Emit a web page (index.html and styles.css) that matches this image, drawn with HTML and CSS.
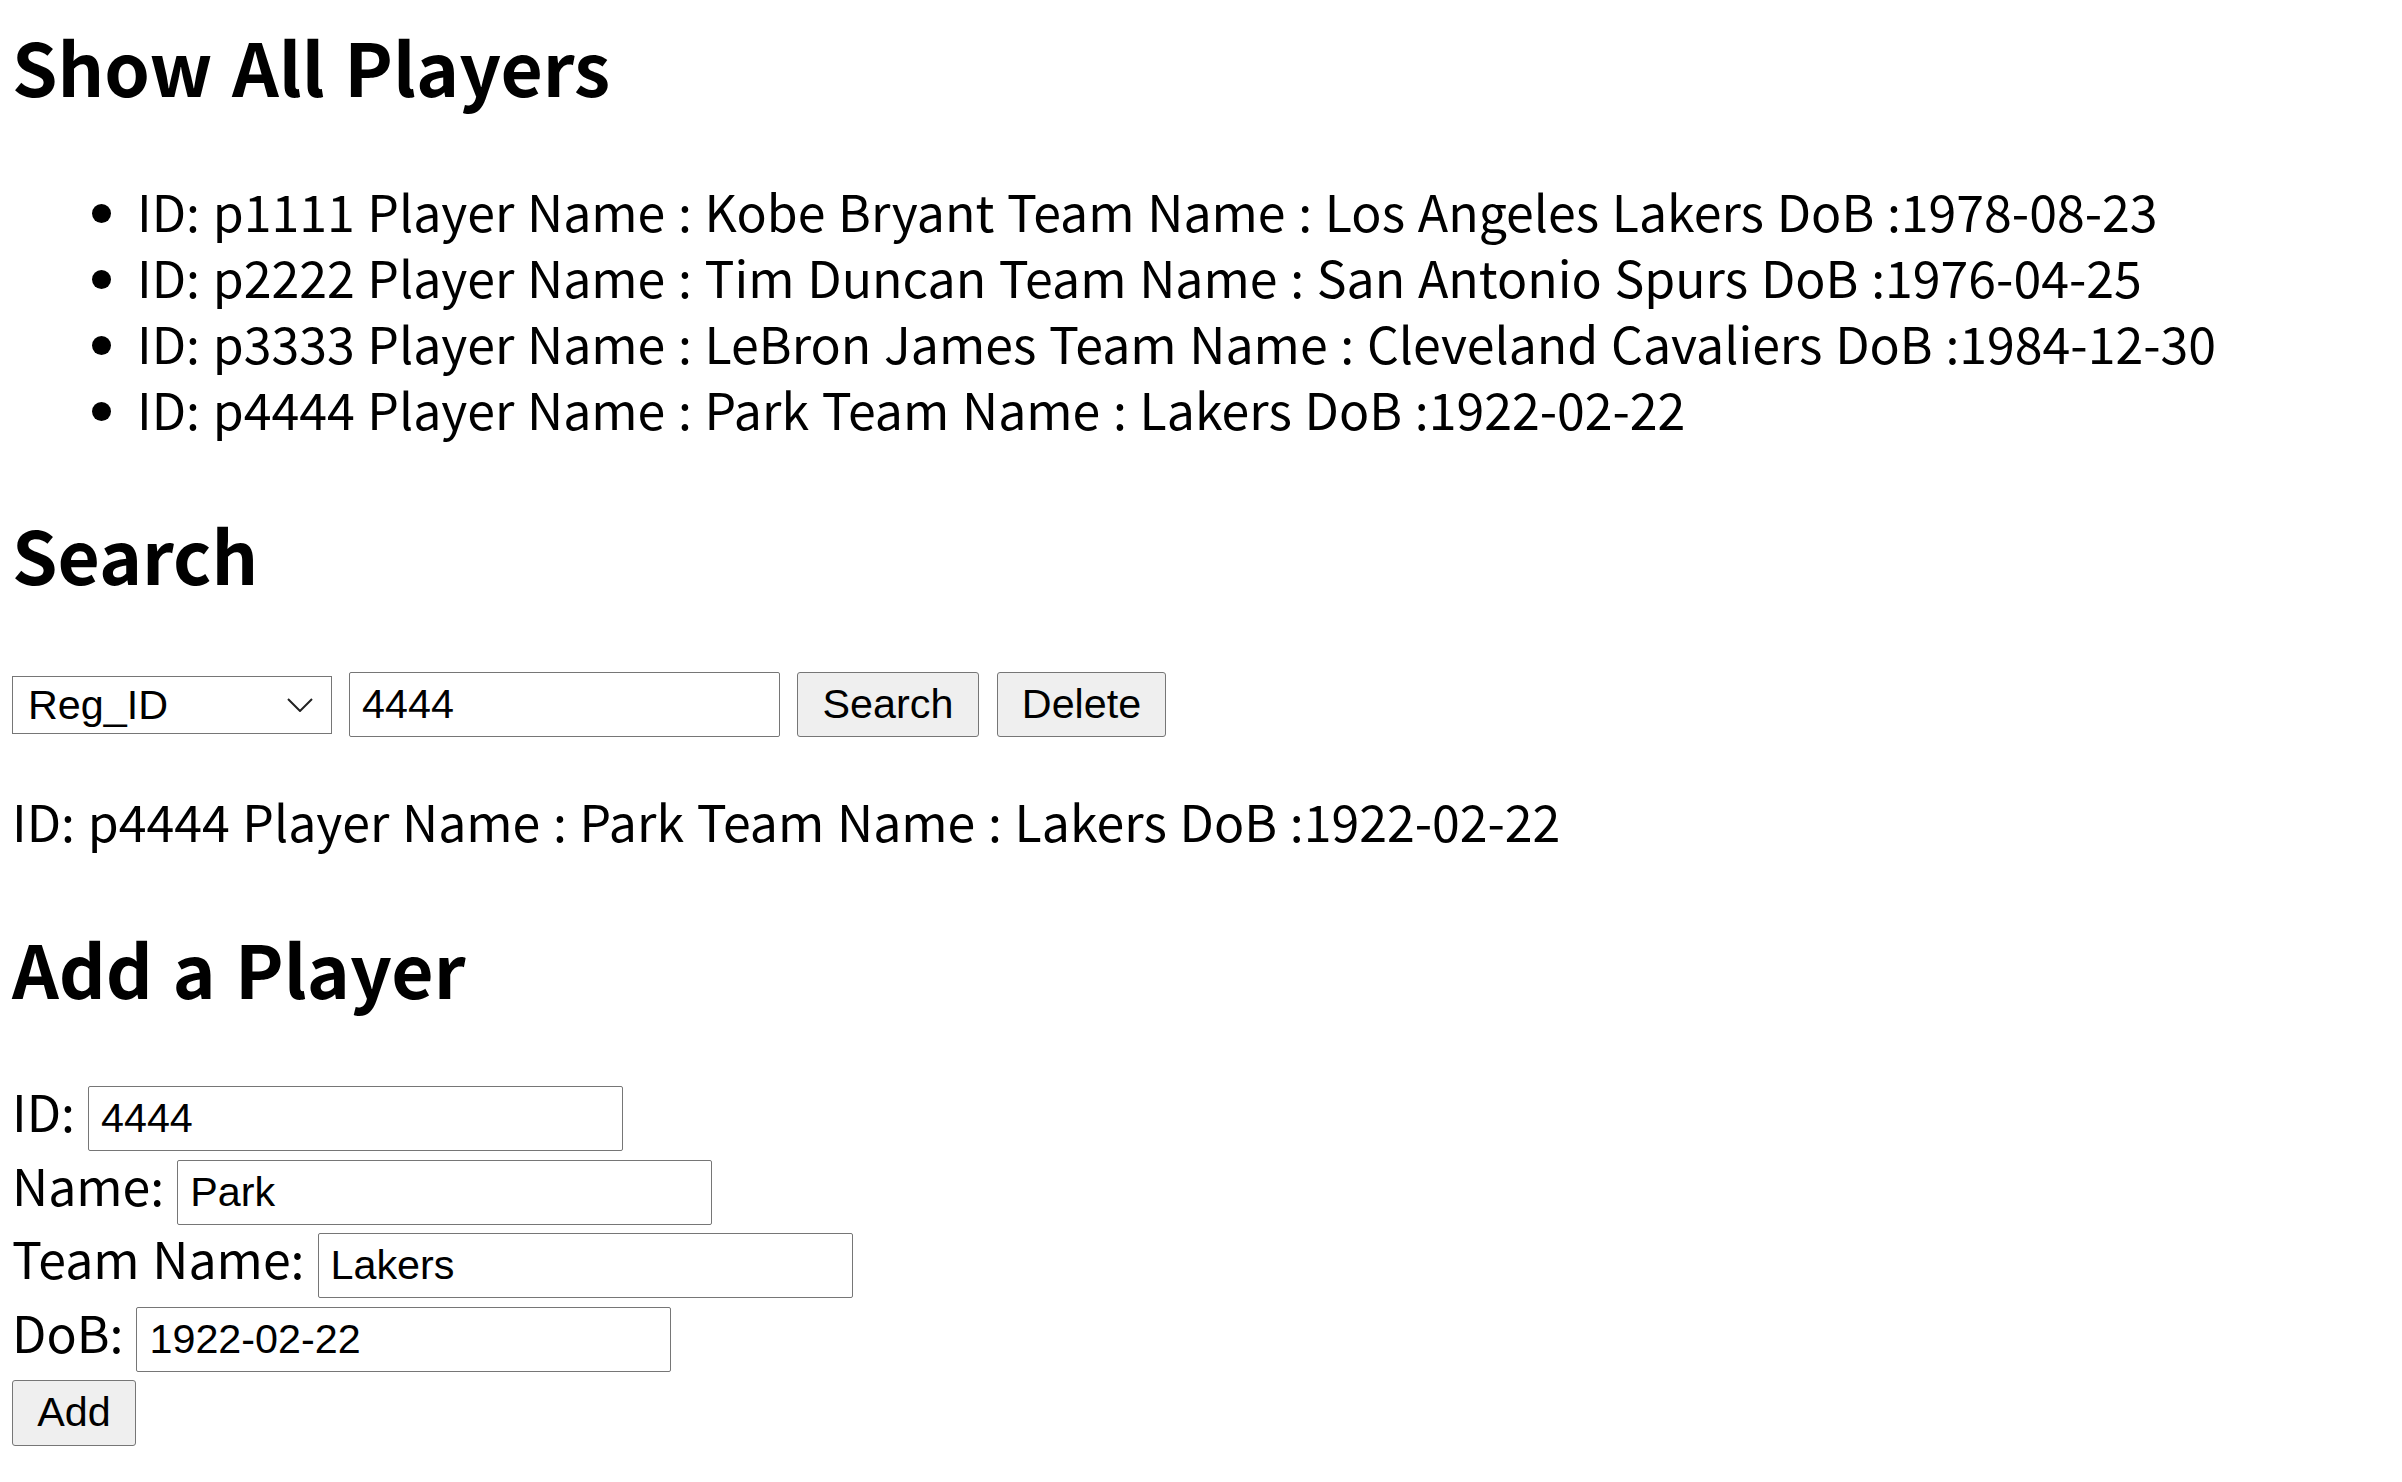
FILE: index.html
```html
<!DOCTYPE html>
<html>
<head>
<meta charset="utf-8">
<title>Players</title>
<link rel="stylesheet" href="styles.css">
</head>
<body>
<h2 class="heading heading-first">Show All Players</h2>
<ul class="players">
  <li>ID: p1111 Player Name : Kobe Bryant Team Name : Los Angeles Lakers DoB :1978-08-23</li>
  <li>ID: p2222 Player Name : Tim Duncan Team Name : San Antonio Spurs DoB :1976-04-25</li>
  <li>ID: p3333 Player Name : LeBron James Team Name : Cleveland Cavaliers DoB :1984-12-30</li>
  <li>ID: p4444 Player Name : Park Team Name : Lakers DoB :1922-02-22</li>
</ul>

<h2 class="heading heading-search">Search</h2>
<div class="search-row">
  <div class="select-wrap">
    <select class="select">
      <option>Reg_ID</option>
    </select>
    <svg class="chevron" width="26" height="14" viewBox="0 0 26 14"><path d="M1 1 L13 13 L25 1" fill="none" stroke="#222" stroke-width="2"/></svg>
  </div>
  <input class="field field-search" type="text" value="4444">
  <button class="btn btn-search">Search</button>
  <button class="btn btn-delete">Delete</button>
</div>

<p class="result">ID: p4444 Player Name : Park Team Name : Lakers DoB :1922-02-22</p>

<h2 class="heading heading-add">Add a Player</h2>
<form class="add-form">
  <div class="row"><label class="label">ID:</label><input class="field field-add" type="text" value="4444"></div>
  <div class="row"><label class="label">Name:</label><input class="field field-add" type="text" value="Park"></div>
  <div class="row"><label class="label">Team Name:</label><input class="field field-add" type="text" value="Lakers"></div>
  <div class="row"><label class="label">DoB:</label><input class="field field-add" type="text" value="1922-02-22"></div>
  <div class="row"><button class="btn btn-add" type="button">Add</button></div>
</form>
</body>
</html>
```

FILE: styles.css
```css
html, body {
  background: #ffffff;
}

body {
  margin: 0;
  padding: 0 12px;
  font-family: "Noto Sans CJK KR", "Noto Sans", sans-serif;
  font-size: 50px;
  line-height: 66px;
  word-spacing: 1.5px;
  color: #000000;
}

.heading {
  font-size: 73px;
  line-height: 90px;
  font-weight: 700;
  word-spacing: 3px;
  margin: 0;
}

.heading-first {
  margin-top: 20px;
}

.players {
  margin: 67px 0 0 0;
  padding: 0 0 0 125px;
  list-style: disc;
}

.heading-search {
  margin-top: 67px;
}

.search-row {
  display: flex;
  align-items: center;
  gap: 17px;
  margin-top: 74px;
}

.select-wrap {
  position: relative;
  width: 320px;
  height: 58px;
}

.select {
  display: block;
  appearance: none;
  -webkit-appearance: none;
  box-sizing: border-box;
  width: 320px;
  height: 58px;
  margin: 0;
  padding: 0 0 0 15px;
  border: 1px solid #767676;
  border-radius: 0;
  background: #ffffff;
  font-family: "Liberation Sans", Arial, sans-serif;
  font-size: 41.3px;
  word-spacing: 0;
  color: #000000;
}

.chevron {
  position: absolute;
  left: 275px;
  top: 22px;
  pointer-events: none;
}

.field {
  box-sizing: border-box;
  height: 65px;
  margin: 0;
  padding: 0 12px;
  border: 1px solid #767676;
  border-radius: 2px;
  background: #ffffff;
  font-family: "Liberation Sans", Arial, sans-serif;
  font-size: 41.3px;
  word-spacing: 0;
  color: #000000;
}

.field-search {
  width: 431px;
}

.btn {
  box-sizing: border-box;
  height: 65px;
  margin: 0;
  padding: 0;
  border: 1px solid #767676;
  border-radius: 3px;
  background: #efefef;
  font-family: "Liberation Sans", Arial, sans-serif;
  font-size: 41.3px;
  word-spacing: 0;
  color: #000000;
}

.btn-search {
  width: 182px;
}

.btn-delete {
  width: 169px;
  margin-left: 1px;
}

.result {
  margin: 50px 0 0 0;
}

.heading-add {
  margin-top: 69px;
}

.add-form {
  display: flex;
  flex-direction: column;
  gap: 7.7px;
  margin-top: 73px;
}

.row {
  display: flex;
  align-items: baseline;
  gap: 13px;
}

.label {
  line-height: 50px;
}

.field-add {
  width: 535px;
}

.btn-add {
  width: 124px;
  height: 66px;
}
```
